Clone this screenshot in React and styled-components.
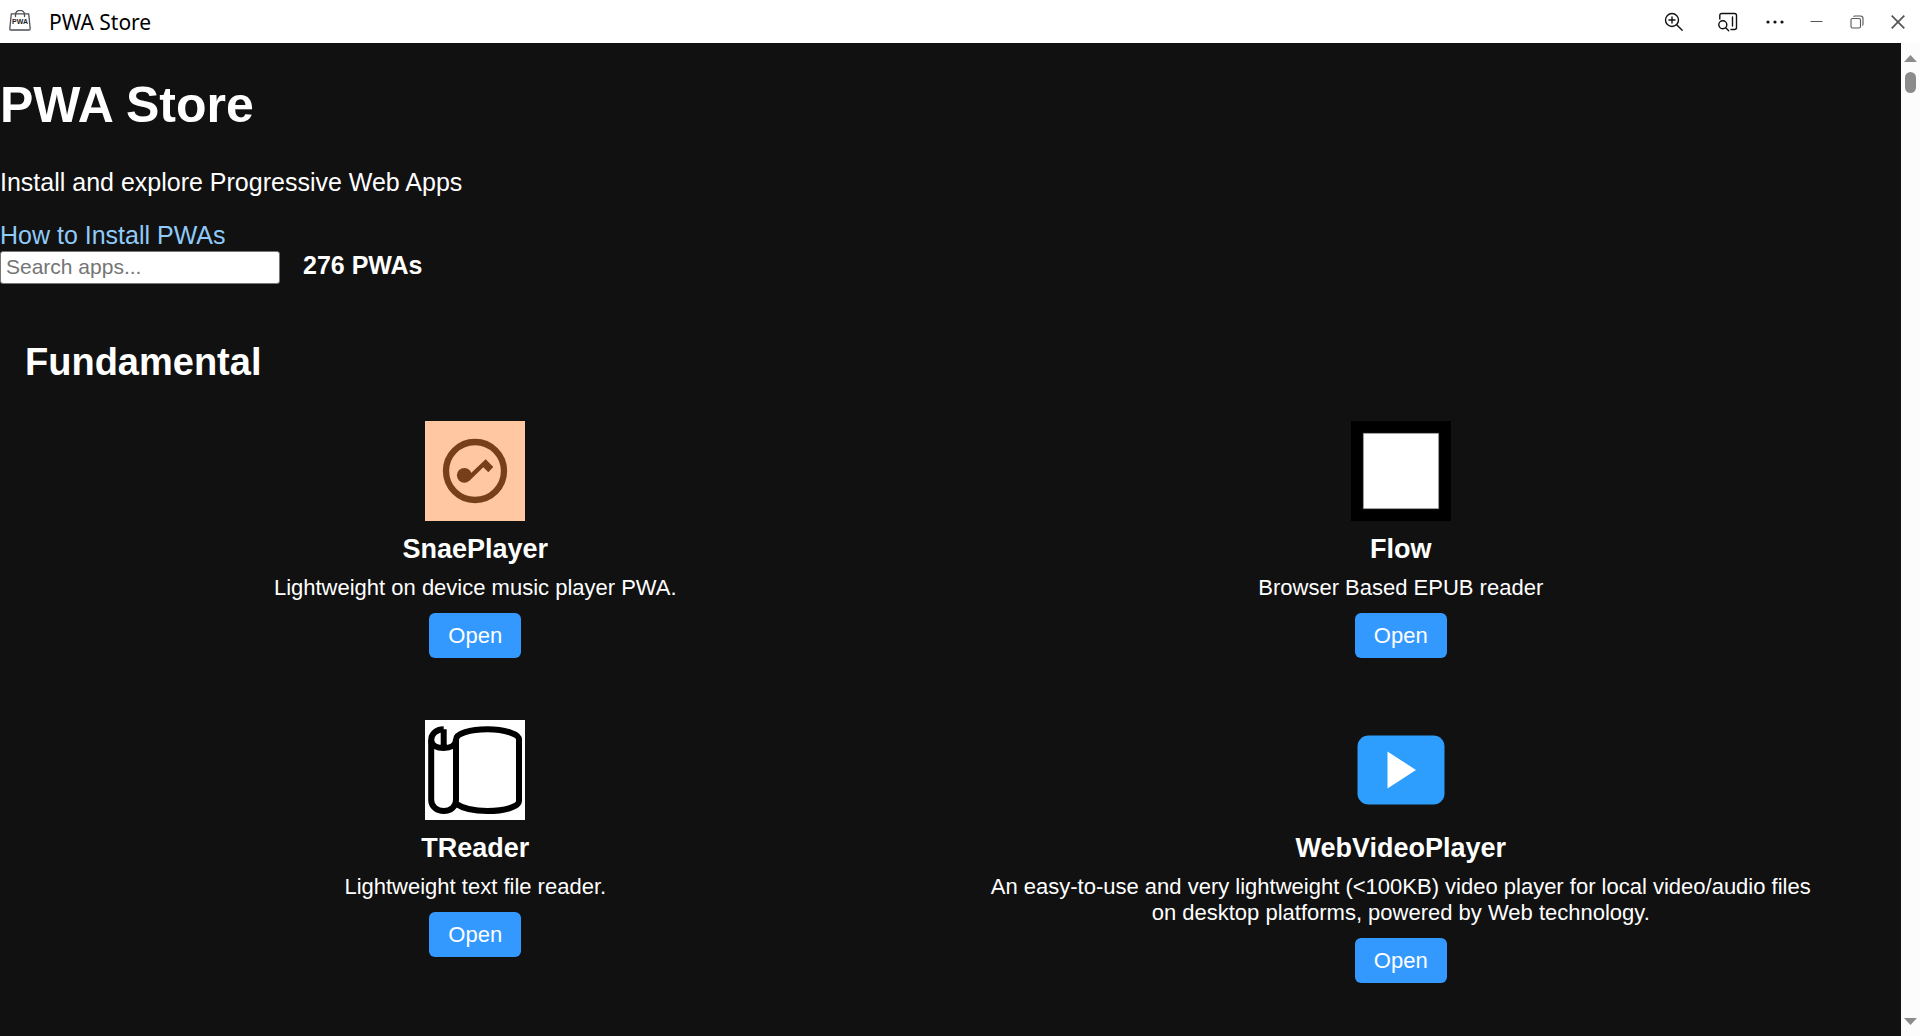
import React from "react";
import styled, { createGlobalStyle } from "styled-components";

const GlobalStyle = createGlobalStyle`
  * { box-sizing: border-box; }
  body {
    margin: 0;
    background: #111;
    color: #fff;
    font-family: "Liberation Sans", Arial, sans-serif;
    font-size: 25px;
    line-height: 28px;
  }
`;

const Window = styled.div`
  display: flex;
  flex-direction: column;
  height: 100vh;
  overflow: hidden;
`;

const TitleBar = styled.header`
  display: flex;
  align-items: center;
  flex: none;
  height: 43px;
  padding: 0 1px 0 8px;
  background: #fff;
  color: #000;
`;

const AppTitle = styled.span`
  flex: 1;
  margin-left: 17px;
  font-family: "Noto Sans", "Open Sans", sans-serif;
  font-size: 21px;
`;

const BarButton = styled.button`
  display: flex;
  align-items: center;
  justify-content: center;
  width: ${(p) => p.$width}px;
  height: 43px;
  padding: 0;
  border: 0;
  background: none;
  color: ${(p) => (p.$muted ? "#555" : "#111")};
`;

const Body = styled.div`
  display: flex;
  flex: 1;
  min-height: 0;
`;

const Page = styled.main`
  flex: 1;
  min-width: 0;
  overflow: hidden;
`;

const ScrollRail = styled.div`
  display: flex;
  flex-direction: column;
  align-items: center;
  flex: none;
  width: 19px;
  padding: 12px 0 11px;
  background: #fcfcfc;
`;

const Thumb = styled.div`
  width: 11px;
  height: 21px;
  margin: 10px 0 auto;
  border-radius: 6px;
  background: #8b8b8b;
`;

const PageTitle = styled.h1`
  margin: 34px 0;
  font-size: 50px;
  line-height: 57px;
`;

const Intro = styled.p`
  margin: 0 0 25px;
`;

const HelpLink = styled.a`
  display: block;
  width: max-content;
  color: #90caf9;
  text-decoration: none;
`;

const SearchRow = styled.form`
  display: flex;
  align-items: center;
  gap: 23px;
`;

const SearchInput = styled.input`
  width: 280px;
  height: 33px;
  padding: 2px 5px;
  border: 1px solid #767676;
  border-radius: 3px;
  background: #fff;
  font-family: inherit;
  font-size: 21px;
  &::placeholder { color: #757575; }
`;

const Count = styled.strong`
  line-height: 33px;
  margin-bottom: 3px;
`;

const Section = styled.section`
  padding: 56px 50px 25px 25px;
`;

const SectionTitle = styled.h2`
  margin: 0;
  font-size: 38px;
  line-height: 42px;
`;

const Grid = styled.div`
  display: grid;
  grid-template-columns: 1fr 1fr;
  gap: 12px 25px;
  margin-top: 13px;
`;

const Card = styled.article`
  display: flex;
  flex-direction: column;
  align-items: center;
  padding: 25px;
  text-align: center;
`;

const CardName = styled.h3`
  margin: 12px 0 10px;
  font-size: 27px;
  line-height: 32px;
`;

const Description = styled.p`
  margin: 0;
  font-size: 22px;
  line-height: 26px;
`;

const OpenButton = styled.button`
  margin-top: 12px;
  height: 45px;
  padding: 0 19px;
  border: 0;
  border-radius: 6px;
  background: #3399ff;
  color: #fff;
  font-family: inherit;
  font-size: 22px;
`;

const BagIcon = () => (
  <svg width="24" height="24" viewBox="0 0 24 24" fill="none" stroke="#4a4f55" strokeWidth="1.3">
    <path d="M3.300 3.800H20.700L22.200 18.800Q22.200 20 21 20H3Q1.800 20 1.800 18.800z" strokeLinejoin="round" />
    <path d="M7.500 6.500V4.500a4.500 4.200 0 0 1 9 0v2" strokeLinecap="round" />
    <text x="12" y="14" textAnchor="middle" fontSize="7" fontWeight="700" fill="#222" stroke="none">PWA</text>
  </svg>
);

const ZoomIcon = () => (
  <svg width="20" height="20" viewBox="0 0 20 20" fill="none" stroke="currentColor" strokeWidth="1.4" strokeLinecap="round">
    <circle cx="8" cy="8" r="6.500" />
    <path d="M12.700 12.700L18.200 18.200M8 5v6M5 8h6" />
  </svg>
);

const SidebarSearchIcon = () => (
  <svg width="20" height="20" viewBox="0 0 20 20" fill="none" stroke="currentColor" strokeWidth="1.4" strokeLinecap="round">
    <path d="M1.800 7V3.500Q1.800 1.500 3.800 1.500H16.500Q18.500 1.500 18.500 3.500V15.500Q18.500 17.500 16.500 17.500H13M14.500 5v9" />
    <circle cx="4.800" cy="12.800" r="4" />
    <path d="M7.700 15.700l3 3" />
  </svg>
);

const DotsIcon = () => (
  <svg width="18" height="6" viewBox="0 0 18 6" fill="currentColor">
    <circle cx="2" cy="3" r="1.600" />
    <circle cx="9" cy="3" r="1.600" />
    <circle cx="16" cy="3" r="1.600" />
  </svg>
);

const MinimizeIcon = () => (
  <svg width="13" height="13" viewBox="0 0 13 13" stroke="currentColor">
    <path d="M0.500 6.500h12" />
  </svg>
);

const RestoreIcon = () => (
  <svg width="14" height="14" viewBox="0 0 14 14" fill="none" stroke="currentColor" strokeWidth="1.100">
    <rect x="1" y="3.500" width="9.500" height="9.500" rx="1.500" />
    <path d="M3.500 1.500Q4 1 5 1h5.500q2.500 0 2.500 2.500V9q0 1-.6 1.500" />
  </svg>
);

const CloseIcon = () => (
  <svg width="14" height="14" viewBox="0 0 14 14" stroke="currentColor" strokeWidth="1.700">
    <path d="M0.700 0.700L13.300 13.300M13.300 0.700L0.700 13.300" />
  </svg>
);

const ArrowIcon = ({ down }) => (
  <svg width="13" height="7" viewBox="0 0 13 7" fill="#8b8b8b">
    <path d={down ? "M0 0h13L6.500 7z" : "M0 7h13L6.500 0z"} />
  </svg>
);

const SnaeLogo = () => (
  <svg width="100" height="100" viewBox="0 0 100 100">
    <path fill="#ffc8a2" d="M0 0h100v100H0z" />
    <circle cx="50" cy="50" r="29" fill="none" stroke="#75401a" strokeWidth="6.300" />
    <circle cx="39.300" cy="54.300" r="7.400" fill="#75401a" />
    <path fill="#75401a" d="M45.500 52.500L60.700 38.300L68.300 46L63.300 51.300L58.300 46.200L44.700 59.500L40 58z" />
  </svg>
);

const FlowLogo = () => (
  <svg width="100" height="100" viewBox="0 0 100 100">
    <path d="M0 0h100v100H0z" />
    <path fill="#fff" stroke="#777" strokeWidth="0.500" d="M12.300 12.300h75.400v75.400H12.300z" />
  </svg>
);

const ReaderLogo = () => (
  <svg width="100" height="100" viewBox="0 0 100 100">
    <path fill="#fff" d="M0 0h100v100H0z" />
    <g fill="none" stroke="#000" strokeWidth="6" strokeLinejoin="round">
      <path d="M18.700 9.300C11 9.500 6.200 14 6.200 20V80C6.200 86.500 12 91 18.800 91S31 86.500 31 80V19.500C31 13.500 45 9.200 62.500 9.200S94 14 94 19.500V81C94 86.500 80 91 62.500 91C49 91 38 88.500 31.500 84" />
      <path d="M18.700 9.300V27.800M6.200 20C6.200 25.500 12 28 18.800 28S31 25.500 31 19.500" />
    </g>
  </svg>
);

const VideoLogo = () => (
  <svg width="100" height="100" viewBox="0 0 100 100">
    <rect x="6.500" y="15.500" width="87" height="69" rx="11" fill="#2e9efe" />
    <path fill="#fff" d="M36.500 31.500L65 50L36.500 68.500z" />
  </svg>
);

const apps = [
  { name: "SnaePlayer", text: "Lightweight on device music player PWA.", Logo: SnaeLogo },
  { name: "Flow", text: "Browser Based EPUB reader", Logo: FlowLogo },
  { name: "TReader", text: "Lightweight text file reader.", Logo: ReaderLogo },
  {
    name: "WebVideoPlayer",
    text: "An easy-to-use and very lightweight (<100KB) video player for local video/audio files on desktop platforms, powered by Web technology.",
    Logo: VideoLogo,
  },
];

export default function App() {
  return (
    <Window>
      <GlobalStyle />
      <TitleBar>
        <BagIcon />
        <AppTitle>PWA Store</AppTitle>
        <BarButton $width={54} aria-label="Zoom"><ZoomIcon /></BarButton>
        <BarButton $width={54} aria-label="Search in sidebar"><SidebarSearchIcon /></BarButton>
        <BarButton $width={40} aria-label="More"><DotsIcon /></BarButton>
        <BarButton $width={42} $muted aria-label="Minimize"><MinimizeIcon /></BarButton>
        <BarButton $width={40} $muted aria-label="Restore"><RestoreIcon /></BarButton>
        <BarButton $width={42} $muted aria-label="Close"><CloseIcon /></BarButton>
      </TitleBar>
      <Body>
        <Page>
          <PageTitle>PWA Store</PageTitle>
          <Intro>Install and explore Progressive Web Apps</Intro>
          <HelpLink href="#install">How to Install PWAs</HelpLink>
          <SearchRow>
            <SearchInput type="text" placeholder="Search apps..." aria-label="Search apps" />
            <Count>276 PWAs</Count>
          </SearchRow>
          <Section>
            <SectionTitle>Fundamental</SectionTitle>
            <Grid>
              {apps.map(({ name, text, Logo }) => (
                <Card key={name}>
                  <Logo />
                  <CardName>{name}</CardName>
                  <Description>{text}</Description>
                  <OpenButton>Open</OpenButton>
                </Card>
              ))}
            </Grid>
          </Section>
        </Page>
        <ScrollRail>
          <ArrowIcon />
          <Thumb />
          <ArrowIcon down />
        </ScrollRail>
      </Body>
    </Window>
  );
}
